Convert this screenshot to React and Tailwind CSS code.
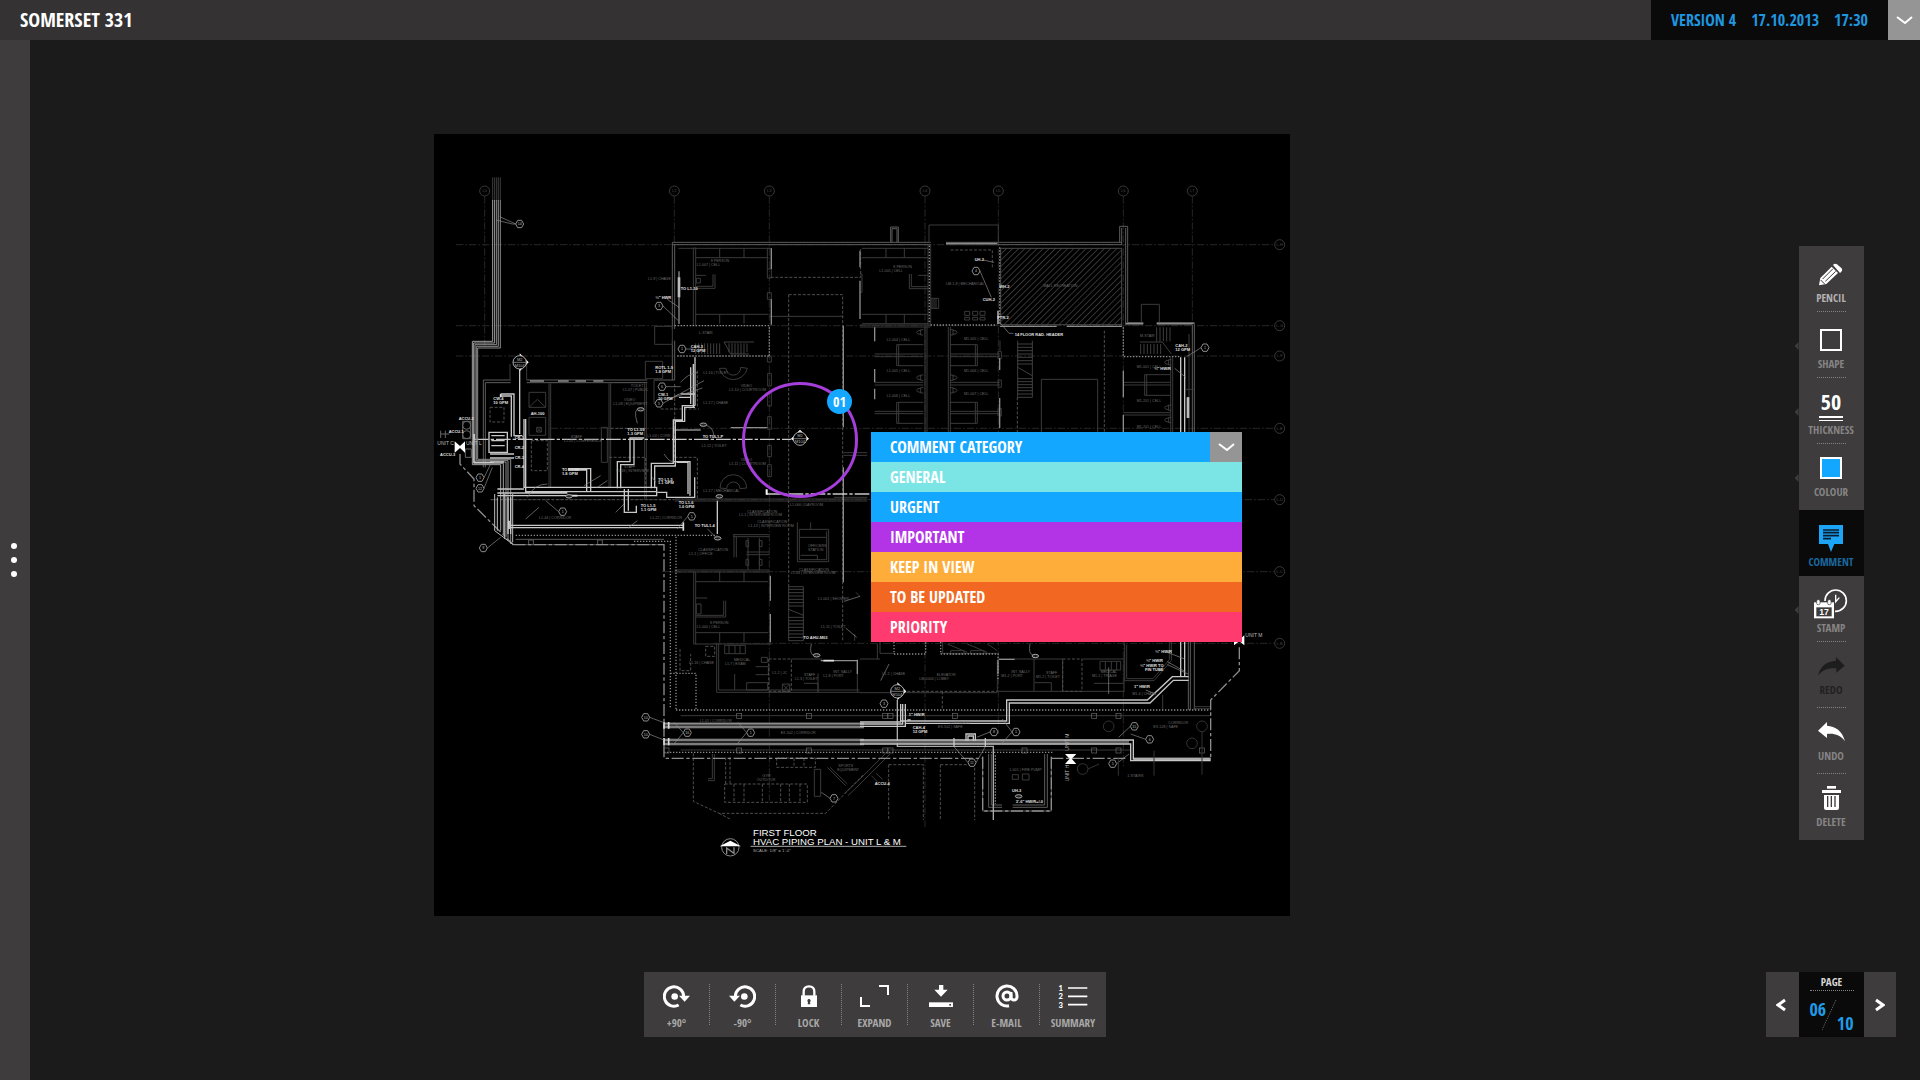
import { useState } from 'react'

const CATEGORIES = [
  { name: 'GENERAL', color: 'bg-[#7be5e6]' },
  { name: 'URGENT', color: 'bg-[#14a7ff]' },
  { name: 'IMPORTANT', color: 'bg-[#b333e7]' },
  { name: 'KEEP IN VIEW', color: 'bg-[#ffad3a]' },
  { name: 'TO BE UPDATED', color: 'bg-[#f26722]' },
  { name: 'PRIORITY', color: 'bg-[#ff3a6f]' },
]

// ---------- icons (3 units = 1px) ----------

const PencilIcon = () => (
  <svg viewBox="0 0 72 69" className="w-6 h-[23px]">
    <path d="M0 67L4 45L38 11L57 30L22 63Z" fill="#fff" />
    <path d="M42 6Q47 -1 54 4L67 15Q72 20 67 26L63 30Z" fill="#fff" />
    <path d="M11 48L42 17M19 55L50 25" stroke="#3e3c3d" strokeWidth="3" />
    <path d="M5 51L17 63" stroke="#3e3c3d" strokeWidth="3" />
  </svg>
)

const ShapeIcon = () => <span className="block size-[22px] border-2 border-white" />

const ColourIcon = () => <span className="block size-[22px] border-2 border-white bg-[#14a7ff]" />

const ThicknessIcon = () => (
  <span className="flex flex-col items-center">
    <span className="text-[22px] leading-[18px] text-white">50</span>
    <span className="mt-[6px] block w-6 h-[5px] border-t-2 border-b border-white" />
  </span>
)

const CommentIcon = () => (
  <svg viewBox="0 0 72 81" className="w-6 h-[27px]">
    <path d="M0 0H72V57H46L36 81L27 57H0Z" fill="#1ca4f6" />
    <path d="M12 15H60M12 23H60M12 32H60M12 41H36" stroke="#0a1c2c" strokeWidth="5" />
  </svg>
)

const StampIcon = () => (
  <svg viewBox="0 0 102 90" className="w-[34px] h-[30px]">
    <circle cx="65" cy="35" r="32" fill="none" stroke="#fff" strokeWidth="5" />
    <path d="M65 17V38L76 26" fill="none" stroke="#fff" strokeWidth="4" />
    <rect x="-4" y="36" width="67" height="60" fill="#3e3c3d" />
    <rect x="0" y="40" width="60" height="48" fill="#fff" />
    <rect x="8" y="32" width="10" height="15" rx="4" fill="#fff" stroke="#3e3c3d" strokeWidth="2" />
    <rect x="41" y="32" width="10" height="15" rx="4" fill="#fff" stroke="#3e3c3d" strokeWidth="2" />
    <rect x="7" y="55" width="46" height="27" fill="#3e3c3d" />
    <text x="30" y="78" textAnchor="middle" fontSize="26" fontWeight="700" fill="#fff" fontFamily="Liberation Sans">17</text>
  </svg>
)

const RedoIcon = () => (
  <svg viewBox="0 0 81 57" className="w-[27px] h-[19px]">
    <path d="M0 56C8 24 28 13 54 11V0L80 26L55 47V34C32 32 14 37 0 56Z" fill="#1d1d1d" />
  </svg>
)

const UndoIcon = () => (
  <svg viewBox="0 0 81 60" className="w-[27px] h-5">
    <path d="M81 58C73 26 52 13 27 11V0L0 26L27 48V36C50 34 67 39 81 58Z" fill="#fff" />
  </svg>
)

const DeleteIcon = () => (
  <svg viewBox="0 0 57 72" className="w-[19px] h-6" fill="#fff">
    <rect x="15" y="0" width="27" height="8" />
    <rect x="0" y="12" width="57" height="9" />
    <path d="M6 27H51V66Q51 72 45 72H12Q6 72 6 66Z" />
    <path d="M17 30V63M28 30V63M39 30V63" stroke="#3e3c3d" strokeWidth="4" />
  </svg>
)

const RotateIcon = ({ back }) => (
  <svg viewBox="0 0 81 68" className="w-[27px] h-[23px]">
    <g transform={back ? 'translate(81 0) scale(-1 1)' : undefined}>
      <path d="M47 59.4A29 29 0 1 1 62 34" fill="none" stroke="#fff" strokeWidth="9" />
      <path d="M48 32H81L65 50Z" fill="#fff" />
      <circle cx="35" cy="34" r="10" fill="#fff" />
    </g>
  </svg>
)

const LockIcon = () => (
  <svg viewBox="0 0 48 66" className="w-4 h-[22px]">
    <path d="M8 32V20Q8 4 24 4T40 20V32" fill="none" stroke="#fff" strokeWidth="7" />
    <rect y="31" width="48" height="35" fill="#fff" />
    <path d="M24 42a5 5 0 0 1 3 9l1 7h-8l1-7a5 5 0 0 1 3-9Z" fill="#3e3c3d" />
  </svg>
)

const ExpandIcon = () => (
  <svg viewBox="0 0 87 66" className="w-[29px] h-[22px]" fill="none" stroke="#fff" strokeWidth="6">
    <path d="M57 3H84V30M3 36V63H30" />
  </svg>
)

const SaveIcon = () => (
  <svg viewBox="0 0 72 66" className="w-6 h-[22px]" fill="#fff">
    <path d="M30 0H43V14H56L36 35L16 14H30Z" />
    <rect y="52" width="72" height="14" />
    <rect x="61" y="57" width="5" height="5" fill="#3e3c3d" />
  </svg>
)

const MailIcon = () => (
  <svg viewBox="0 0 24 24" className="size-6" fill="none" stroke="#fff" strokeWidth="3">
    <circle cx="12" cy="12" r="4" />
    <path d="M16 8v5a3 3 0 0 0 6 0v-1a10 10 0 1 0-8 9.8" />
  </svg>
)

const SummaryIcon = () => (
  <svg viewBox="0 -12 90 93" className="w-[30px] h-[31px] shrink-0" fill="#fff">
    <g fontFamily="Lato" fontSize="23" fontWeight="900" textAnchor="middle">
      <text x="8" y="18">1</text>
      <text x="8" y="43">2</text>
      <text x="8" y="68">3</text>
    </g>
    <path d="M30 9H88M30 34H88M30 59H88" stroke="#fff" strokeWidth="5" />
  </svg>
)

const Chevron = () => (
  <svg viewBox="0 0 17 8" className="w-[17px] h-2" fill="none" stroke="#fff" strokeWidth="2">
    <path d="M1 1L9 7L16 1" />
  </svg>
)

const TOOLS = [
  { label: 'PENCIL', Icon: PencilIcon, pad: 'pt-3', text: 'text-[#b4b3b3]', divider: true },
  { label: 'SHAPE', Icon: ShapeIcon, pad: 'pt-3', text: 'text-[#868585]', divider: true, flyout: true },
  { label: 'THICKNESS', Icon: ThicknessIcon, pad: 'pt-3', text: 'text-[#868585]', divider: true, flyout: true },
  { label: 'COLOUR', Icon: ColourIcon, pad: 'pt-2', text: 'text-[#868585]', flyout: true },
  { label: 'COMMENT', Icon: CommentIcon, pad: 'pt-3', text: 'text-[#1b689f]', active: true },
  { label: 'STAMP', Icon: StampIcon, pad: 'pt-3', text: 'text-[#868585]', divider: true, flyout: true },
  { label: 'REDO', Icon: RedoIcon, pad: 'pt-2', text: 'text-[#222]', divider: true },
  { label: 'UNDO', Icon: UndoIcon, pad: 'pt-2', text: 'text-[#868585]', divider: true },
  { label: 'DELETE', Icon: DeleteIcon, pad: 'pt-2', text: 'text-[#868585]' },
]

const ACTIONS = [
  { label: '+90°', icon: <RotateIcon /> },
  { label: '-90°', icon: <RotateIcon back /> },
  { label: 'LOCK', icon: <LockIcon /> },
  { label: 'EXPAND', icon: <ExpandIcon /> },
  { label: 'SAVE', icon: <SaveIcon /> },
  { label: 'E-MAIL', icon: <MailIcon /> },
  { label: 'SUMMARY', icon: <SummaryIcon /> },
]

// ---------- floor plan (3 units = 1px) ----------

const GRID_COLUMNS = [
  [152, 'L0', 640], [721, 'L2', 330], [1006, 'L3', 2000], [1473, 'L4', 2080],
  [1693, 'L5', 1800], [2068, 'L6', 1900], [2275, 'L7', 600],
]

const GRID_ROWS = [
  [332, 'L-H', 66], [575, 'L-G', 66], [666, 'L-F', 66], [883, 'L-E', 350],
  [1097, 'L-D', 170], [1313, 'L-C', 684], [1528, 'L-B', 840],
]

// left x, baseline y, text
const ROOM_LABELS = [
  [830, 383, '8 PERSON'], [788, 395, 'L1-007 | CELL'], [642, 437, 'L1-9 | CHASE'], [795, 601, 'L-STAIR'],
  [808, 720, 'L1-16 | TOILET'], [920, 760, 'VIDEO'], [886, 771, 'L1-10 | COURTROOM'], [808, 809, 'L1-17 | CHASE'],
  [570, 800, 'VIDEO'], [538, 812, 'L1-08 | EQUIPMENT'], [590, 760, 'TOILET'], [566, 771, 'L1-07 | PUBLIC'],
  [410, 912, 'STAFF'], [390, 923, 'L1-05 | CONFERENCE'], [570, 1001, 'STAFF'], [546, 1013, 'L1-18 | INTERVIEW'],
  [803, 940, 'L1-12 | TOILET'], [920, 981, 'VIDEO'], [886, 993, 'L1-11 | COURTROOM'], [808, 1073, 'L1-17 | MECHANICAL'],
  [315, 1154, 'L1-44 | CORRIDOR'], [648, 1154, 'L1-22 | CORRIDOR'], [640, 909, 'L1-04 | CORR'],
  [1068, 1116, 'L1-000 | DAYROOM'], [940, 1136, 'CLASSIFICATION'], [915, 1147, 'L1-1 | INTERVIEW ROOM'],
  [970, 1167, 'CLASSIFICATION'], [943, 1178, 'L1-1X | INTERVIEW ROOM'], [793, 1252, 'CLASSIFICATION'],
  [765, 1264, 'L1-1 | OFFICE'], [1122, 1239, 'OFFICERS'], [1122, 1250, 'STATION'],
  [1095, 1311, 'CLASSIFICATION'], [1070, 1321, 'L1-03 | INTERVIEW ROOM'],
  [1152, 1397, 'L1-001 | SHOWER'], [1160, 1482, 'L1-11 | TOILET'], [828, 1471, '8 PERSON'], [788, 1483, 'L1-000 | CELL'],
  [765, 1589, 'L1-16 | CHASE'], [900, 1582, 'MEDICAL'], [873, 1594, 'L1-7 | EXAM'], [1015, 1621, 'L1-2 | JC'],
  [1110, 1625, 'STAFF'], [1082, 1638, 'L1-3 | TOILET'], [1198, 1618, 'INT. SALLY'], [1168, 1629, 'L1-8 | PORT'],
  [797, 1763, 'L1-01 | CORRIDOR'], [1040, 1799, 'EX-502 | CORRIDOR'], [985, 1929, 'GYM'], [968, 1941, 'OUTDOOR'],
  [1213, 1899, 'SPORTS'], [1210, 1911, 'EQUIPMENT'],
  [1378, 402, '8 PERSON'], [1336, 414, 'L1-001 | CELL'], [1536, 452, 'LM-1-8 | MECHANICAL'], [1828, 458, 'MALL RECREATION'],
  [1358, 620, 'L1-004 | CELL'], [1358, 713, 'L1-005 | CELL'], [1358, 788, 'L1-006 | CELL'],
  [1590, 617, 'M1-005 | CELL'], [1590, 715, 'M1-006 | CELL'], [1590, 784, 'M1-007 | CELL'],
  [2108, 703, 'M1-001 | CELL'], [2108, 803, 'M1-201 | CELL'], [2108, 883, 'M1-201 | CELL'], [2118, 608, 'M-STAIR'],
  [1345, 1623, 'L1-2 | CHASE'], [1508, 1625, 'ELEVATOR'], [1456, 1637, 'LM-0000 | LOBBY'],
  [1732, 1618, 'INT. SALLY'], [1702, 1629, 'M1-2 | PORT'], [1836, 1620, 'STAFF'], [1806, 1632, 'M1-2 | TOILET'],
  [2000, 1618, 'MEDICAL'], [1974, 1629, 'M1-1 | TRIAGE'], [2095, 1683, 'M1-4 | CHASE'],
  [1546, 1770, 'CORRIDOR'], [1512, 1783, 'EX-502 | SAFE'], [2203, 1770, 'CORRIDOR'], [2158, 1783, 'EX-528 | SAFE'],
  [1726, 1911, '1-001 | FIRE PUMP'], [2080, 1928, '1-STAIRS'],
]

const PIPE_LABELS = [
  [664, 496, '¾" HWR'], [740, 467, 'TO L1-10'], [770, 641, 'CAH-3'], [770, 653, '12 GPM'], [664, 704, 'ROTL 1-9'],
  [664, 716, '1.8 GPM'], [178, 798, 'CW-4'], [178, 809, '10 GPM'], [290, 842, 'AH-100'], [74, 857, 'ACCU-2'],
  [44, 898, 'ACCU-1'], [18, 965, 'ACCU-3'], [384, 1012, 'TO L1-00'], [384, 1023, '1.8 GPM'], [806, 913, 'TO TUL1-P'],
  [672, 1040, 'TO L1-5'], [672, 1051, '1.1 GPM'], [734, 1110, 'TO L1-6'], [734, 1121, '1.0 GPM'],
  [620, 1119, 'TO L1-5'], [620, 1130, '1.1 GPM'], [782, 1179, 'TO TUL1-4'], [672, 786, 'CW-1'], [672, 797, '10 GPM'],
  [580, 892, 'TO L1-09'], [580, 903, '1.3 GPM'], [242, 915, 'CR-1'], [242, 945, 'CR-2'], [242, 976, 'CR-3'], [242, 1003, 'CR-4'],
  [1622, 380, 'UH-2'], [1646, 500, 'CUH-2'], [1696, 461, 'WH-2'], [1690, 555, 'FTR-2'],
  [1742, 605, '14 FLOOR RAD. HEADER'], [2224, 640, 'CAH-2'], [2224, 652, '12 GPM'], [2160, 708, '¾" HW/R'],
  [2163, 1557, '¾" HW/R'], [2136, 1583, '¾" HW/R'], [2118, 1599, '¾" HW/R TO'], [2133, 1612, 'FIN TUBE'],
  [2100, 1661, '1" HW/R'], [1108, 1514, 'TO AHU-M03'], [1424, 1745, '1" HW/R'], [1436, 1784, 'CAH-4'], [1436, 1796, '12 GPM'],
  [1322, 1953, 'ACCU-4'], [1734, 1974, 'UH-3'], [1745, 2006, '3\'-6" HW/R+/-0'],
]

const KEYNOTES = [
  [257, 270, '14'], [744, 645, '1'], [675, 516, '3'], [684, 758, '6'], [675, 808, '5'], [138, 1031, '1'], [138, 1063, '12'],
  [386, 1133, '1'], [773, 1147, '5'], [148, 1242, '9'], [635, 1750, '10'], [635, 1801, '10'], [760, 1796, '16'],
  [950, 1796, '1'], [1200, 1993, '7'], [1626, 411, '4'], [2313, 641, '1'], [1350, 1709, '3'], [1680, 1794, '8'],
  [1746, 1794, '1'], [1614, 1886, '11'], [2101, 1777, '15'], [2147, 1816, '6'], [2036, 1889, '5'],
]

const OUTER_WALLS = [
  'M715 325H1490M715 332H1490M1536 325H2063M1536 332H2063M715 325V585M722 332V585M715 620V738M722 620V738',
  'M1370 325V279H1393V325M1374 325V284H1389V325M2057 325V277H2081V566M2063 332V282M2075 282V572',
  'M2081 566H2128M2075 572H2128M2168 566H2281V1728M2168 572H2275V900M2263 1520V1728M2269 1520V1728',
  'M148 738H230M154 746H230M278 738H640M278 746H640M660 738H722M148 738V1000M154 746V1000',
  'M1646 1868V2031H1852V1868M1664 1860V2020H1704M1736 2020H1840V1860M1672 1860V2013H1704M1736 2013H1832V1860',
  'M245 1216H690M245 1232H690M284 1218H298V1232H284ZM491 1218H505V1232H491Z',
]

const DIM_WALLS = [
  // left wing
  'M345 748V1060M350 748V1060M525 748V1060M530 748V1060M632 748V1095M637 748V1095M660 738V810M228 738V690M278 738V690M320 738V746',
  'M722 1095H1300M722 1101H1300',
  // cells on the top left
  'M778 340V575M785 340V575M785 371H1003M785 541H1003M857 343V371M930 343V371M857 541V569M930 541V569M733 343H1006',
  'M785 424H815M785 457H837V421M785 463H843V421M787 433h12v14h-12zM662 577H715V631H662ZM634 682H686V734H634Z',
  'M1006 547H1228M1000 343H1012V405H1000ZM1000 405V432H1012V405M1000 476H1012V496H1000ZM1000 668H1012V684H1000Z',
  'M1001 718H1012V756H1001ZM1001 778H1012V816H1001ZM1001 848H1012V886H1001ZM1001 934H1012V968H1001ZM1001 992H1012V1028H1001Z',
  // courtroom desks
  'M856 703A43 43 0 0 0 940 703L920 700A22 22 0 0 1 876 703ZM858 1062A40 40 0 0 1 938 1062L918 1064A20 20 0 0 0 878 1064Z',
  'M502 880H520V985H502ZM285 775H335V820H285ZM285 850H335V904H285ZM308 880h14v14h-14zM308 880l14 14m0-14l-14 14M285 820L310 796L335 820',
  // cells on the top right of the day room
  'M1284 343H1482M1284 371H1482M1284 541H1482M1284 569H1482M1356 343V371M1411 343V371M1356 541V569M1411 541V569',
  'M1490 332V572M1482 332V572M1426 420V464H1482M1432 420V458H1482M1453 424H1482M1485 273H1693V330M1485 273V325M1278 420H1284V475H1278M1278 573H1490M1278 579H1490',
  'M1322 660H1468M1322 668H1468M1322 745H1468M1322 753H1468M1322 832H1468M1322 839H1468M1548 660H1698M1548 668H1698M1548 745H1698M1548 753H1698M1548 832H1698M1548 839H1698',
  'M1388 632H1468M1388 632V695H1468M1394 632V695M1388 805H1468M1388 805V868H1468M1394 805V868M1548 632H1630V695H1548M1624 632V695M1548 805H1630V868H1548M1624 805V868',
  'M1473 579V894M1479 579V894M1543 579V894M1549 579V894M1698 620V650M1692 652h10v22h-10zM1692 738h10v22h-10zM1692 824h10v22h-10z',
  'M1490 493H1514V523H1490ZM1494 493V523M1500 493V523M1506 493V523M1592 532h15v12h-15zM1616 532h15v12h-15zM1638 532h15v12h-15zM1592 550h15v8h-15zM1616 550h15v8h-15zM1638 550h15v8h-15z',
  'M1822 894V736H1991V894M2122 566V511H2176V566M2068 745H2210M2068 753H2210M2068 836H2210M2068 843H2210M2132 722H2210M2132 722V784H2210M2138 722V784M2210 670V894M2216 670V894M2265 600V766H2281M2256 766H2265V894',
  // classification office and lower cell block
  'M897 1202H1006M897 1208H1006M900 1202V1270M907 1208V1270M937 1254H1006M937 1262H1006M936 1220h8v18h-8zM976 1220h8v18h-8zM936 1276h8v18h-8zM976 1276h8v18h-8zM942 1212V1308M976 1212V1308',
  'M1090 1165V1283H1184V1186H1096V1277H1178V1192M1096 1210H1178M1100 1264H1150V1277M1130 1165V1186M1200 1090H1300M1228 956H1300M1228 964H1300',
  'M722 1308H1006M722 1314H1006M779 1314V1530M785 1314V1530M785 1343H1003M785 1496H1003M857 1314V1343M930 1314V1343M857 1496V1525M930 1496V1525M779 1530H1012M785 1392H820M785 1444H869V1400M785 1449H875V1400M787 1410h14v30h-14z',
  'M848 1530V1675H1280M854 1530V1668H1276M872 1534H934V1559H872ZM885 1534V1559M903 1534V1559M918 1534V1559M902 1620V1668M938 1646H1001V1668H938ZM965 1598H1003V1622H965M982 1570H1000V1585H982Z',
  'M1072 1575H1165M1110 1648H1152V1675M1152 1618V1675M1045 1650h22v22h-22zM1045 1650l22 22m0-22l-22 22M1270 1575V1675M1262 1500v20M1266 1375L1278 1388',
  'M1338 1575H1278M1330 1528V1575M1338 1524V1558H1380M1526 1524V1558M1520 1558H1690M1550 1550h40v10h-40zM1610 1550h40v10h-40zM1540 1530l60 25M1600 1530l60 25M1660 1530l30 20',
  'M1690 1575H1886V1672M1800 1575V1672M1690 1578V1672M1690 1672H2072M1802 1646H1852V1672M1946 1575H2070V1672M1998 1582H2060V1608H1998ZM2014 1582V1608M2032 1582V1608M2048 1582V1608M1980 1648H2068',
  'M2072 1525V1640H2160L2212 1580V1520M2078 1532V1634H2157L2206 1577V1520M2281 1718H2330M2281 1724H2330M2186 1682V1728M1278 1676H1690',
  // service building and gym
  'M1735 1922h18v14h-18zM1765 1920h20v18h-20z',
  'M835 1860V1934H822M841 1860V1940H822M1180 1900L1235 1955M1188 1900L1240 1950M1242 1985L1278 1950M1232 1978L1278 1935M1278 1950L1368 1860M1278 1935L1353 1860M1312 1925l20 20M1326 1918l20 18M1141 1906H1160V1987H1141Z',
  'M740 1745H2330M740 1848H2090',
]

const STAIRS = [
  'M785 628V660M794 628V660M803 628V660M812 628V660M821 628V660M830 628V660M839 628V660M848 628V660M857 628V660',
  'M870 624H960M870 624L890 660H945M885 628V655M894 628V660M903 628V660M912 628V660M921 628V660M930 628V660M939 628V655',
  'M1064 1358H1108V1520H1064ZM1064 1366H1108M1064 1376H1108M1064 1386H1108M1064 1396H1108M1064 1406H1108M1064 1416H1108M1064 1426L1108 1444M1064 1450H1108M1064 1460H1108M1064 1470H1108M1064 1480H1108M1064 1490H1108M1064 1500H1108M1064 1510H1108',
  'M1751 620V790H1795V620M1751 630H1795M1751 640H1795M1751 650H1795M1751 660H1795M1751 670H1795M1751 680H1795M1751 690H1795M1751 700L1795 725M1751 734H1795M1751 743H1795M1751 752H1795M1751 761H1795M1751 770H1795M1751 780H1795',
  'M2118 624H2185L2212 660M2120 630V660M2130 630V660M2140 630V660M2150 630V660M2160 630V660M2170 630V660M2180 630V660M2168 580V622M2178 580V622M2188 580V622M2198 580V622M2208 580V622',
]

const DOTTED_WALLS = [
  'M722 575H1006M730 666H1006M1006 580V666', 'M245 1204H850', 'M600 1222H709V1725M726 1208V1725', 'M709 1618H786V1725M726 1728H2330M690 1855H1860',
  'M1490 573H1690M1486 335V570M1697 340V570M2068 580V668H2240', 'M1380 1524V1560H1475V1524M1520 1524V1560H1692V1640', 'M1684 1864V2010',
]

const DASHED_WALLS = [
  'M530 883H635M525 970H635V1060M722 970H790V1095M790 710V820M722 750V970M680 825H795', 'M1064 482H1226V1520M1064 482V1358M1010 430H1280V345',
  'M1004 1575H1072V1672H1004Z', 'M1420 1672H1690M1525 1672V1728M1886 1575H1944V1672H1886Z', 'M168 820H210V864H168ZM292 920H340V1010H292ZM170 1097H720',
  'M778 1858V2002L855 2038H1175L1290 1920M855 2038l35 18', 'M872 1950H1120V2005H872ZM900 1950V2005M930 1950V2005M985 1950V2005M1040 1950V2005M1066 1950V2005M1098 1950V2005',
  'M1028 1872H1144V1900H1028ZM1080 1872V1900M1110 1872V1900M888 1870V1950M875 1870V1950', 'M1364 1892H1468V2058M1364 1892V2058M1519 1892H1622V2058M1519 1892V2058',
  'M1750 790V894M2011 590V894M815 1537H842V1567H815ZM1550 348H1675V400M738 1545V1610H770V1560',
]

const MID_WALLS = [
  'M1012 343V405M1012 496V572M1228 575V880M1228 1000V1345M1009 1325V1400M1009 1440V1525M1278 350V400M1278 440V555M1322 580V622M1322 705V745M1322 764V796',
  'M1697 672V708M1697 792V882M1698 577H1868M1898 577H2064M2068 710V790M2068 843V894M2075 568H2128M2168 568H2279M1536 328H1690M735 412V570',
  'M288 741H330M372 741H404M424 741H456M478 741H508M1160 1580H1270V1620M1695 1576H1742M1692 1580V1620M720 888H800M890 881H1000',
]

const PIPES = [
  'M200 780H240V905H265M200 786H232V908M257 705V900M270 855V1060H668V1085H190M275 855V1073H668M270 1065H190M190 1077H400M430 1085H560',
  'M458 1073V1008H402M470 1073V1004H402M550 1063V983H588V912H630M560 1063V992H600V915M652 1063V988H718V858H745V815H783M662 1063V996H724V862H752V820H783',
  'M571 1065V1135H607V1115M583 1065V1130M670 1075H698V1090H782V1030M720 983H768V1085M728 985H762V1080M783 670V815M778 690V820M770 700V810M740 780H783M735 790H770',
  'M230 1174H748M230 1181H748M222 1090V1200M230 1090V1200M850 1100V1200M120 900V985H180M165 895H220V955H165ZM172 905H212M172 920H212M172 935H212M168 960H240M168 972H240M168 984H210',
  'M1278 1764H1400V1710M1278 1770H1406V1710M1278 1777H1414V1710M1400 1761H1718V1698H2140L2215 1628H2264M1414 1768H1726V1707H2148L2218 1639H2264',
  'M1278 1818H2098V1875H2330M1278 1830H2090V1880H2330M2240 670V900M2252 670V900M2240 1520V1628M2252 1520V1628M2262 790V852',
  'M1596 1820V1800H1624V1820M1602 1820V1806H1618V1820M1560 1812V1838M1654 1812V1838M1420 1758H1430M1692 530V570',
]

const HEAVY_DUCTS = 'M690 1769H1290M690 1779H1290M690 1818H1290M690 1830H1290'

const LEADERS = [
  'M245 270L197 248M245 270H235L186 258', 'M687 516L733 560M700 496L735 520', 'M756 645H778', 'M696 758H740M687 808L735 780M150 1031L170 990M150 1063L175 1000',
  'M374 1133L335 1100M761 1147L730 1185M160 1242L200 1210', 'M647 1750L690 1766M647 1801L690 1818M748 1796L720 1765M748 1796L718 1832M938 1796L912 1765M938 1796L908 1832',
  'M1638 411L1672 490M1647 378L1680 385M1693 560L1725 598H1738M2301 641L2258 668M2222 703L2255 730', 'M2200 1555L2252 1575M2200 1583L2252 1612M2200 1592L2262 1620M2135 1668L2165 1680',
  'M1668 1794L1628 1810M1734 1794L1705 1755M1734 1794L1700 1832M1602 1886L1560 1838M1626 1886L1654 1838M2089 1777L2054 1810M2135 1816L2090 1800M2048 1889L2085 1860',
  'M1188 1993L1162 1975M1132 1530Q1125 1560 1140 1564M1788 1530Q1782 1560 1798 1564M610 868Q595 820 620 826M840 908Q838 875 810 873M820 1184L845 1210M275 1155L315 1120M582 1182L610 1160M665 1045L655 1030M1365 1590L1340 1640M2024 1680V1600M1230 1402L1278 1387M1235 1482L1268 1510',
  'M280 1090Q300 1050 340 1050M450 1055L500 1025M490 1060L520 1040M690 960Q710 990 720 980M740 745Q760 720 790 716M700 800L810 740M720 790L805 762M545 1135L570 1110',
]

// small oval tags at the ends of leaders
const TAGS = [[620, 826], [808, 872], [856, 1087], [851, 1213], [1148, 1564], [1804, 1566], [405, 1087], [1754, 1987]]

const BOLLARDS = [
  [908, 1738], [1117, 1738], [690, 1842], [908, 1842], [1117, 1842], [1346, 1738], [1362, 1738], [1555, 1738], [1973, 1738],
  [2046, 1738], [1346, 1842], [1362, 1842], [1764, 1842], [1973, 1842], [2046, 1842], [2296, 1842],
]

const SectionMark = ({ x, y, dir }) => (
  <g>
    <path
      d={dir === 'up' ? 'M-27 0L0 -27L27 0L18 8H-18Z' : 'M0 -27L27 0L0 27V18L0 -18Z'}
      transform={`translate(${x} ${y})`}
      fill="#fff"
    />
    <circle cx={x} cy={y} r="20" fill="#000" stroke="#aaa" strokeWidth="3" />
    <path d={`M${x - 20} ${y}H${x + 20}`} stroke="#aaa" strokeWidth="2" />
    <text x={x} y={y - 4} textAnchor="middle" fontSize="12" fill="#bbb">M2</text>
    <text x={x} y={y + 13} textAnchor="middle" fontSize="12" fill="#bbb">M104</text>
  </g>
)

const FloorPlan = () => (
  <svg viewBox="0 0 2568 2346" className="block w-full bg-black font-normal" fill="none" fontFamily="Liberation Sans" role="img" aria-label="First floor HVAC piping plan">
    <defs>
      <pattern id="hatch" width="13" height="13" patternUnits="userSpaceOnUse" patternTransform="rotate(45)">
        <path d="M0 0V13" stroke="#4c4c4c" strokeWidth="4" />
      </pattern>
    </defs>

    <g stroke="#262626" strokeWidth="3">
      {GRID_COLUMNS.map(([x, , end]) => (
        <path key={x} d={`M${x} 187V${end}`} strokeDasharray="22 6 5 6" />
      ))}
      {GRID_ROWS.map(([y, , start]) => (
        <path key={y} d={`M${start} ${y}H2521`} strokeDasharray="22 6 5 6" />
      ))}
      {GRID_COLUMNS.map(([x]) => <circle key={x} cx={x} cy="171" r="15" stroke="#383838" />)}
      {GRID_ROWS.map(([y]) => <circle key={y} cx="2537" cy={y} r="15" stroke="#383838" />)}
    </g>
    <g fill="#4a4a4a" fontSize="12" textAnchor="middle">
      {GRID_COLUMNS.map(([x, name]) => <text key={x} x={x} y="175">{name}</text>)}
      {GRID_ROWS.map(([y, name]) => <text key={y} x="2537" y={y + 4}>{name}</text>)}
    </g>

    <rect x="1700" y="343" width="363" height="229" fill="url(#hatch)" stroke="#4a4a4a" strokeWidth="3" />

    <g stroke="#5c5c5c" strokeWidth="3">
      {OUTER_WALLS.map((d) => <path key={d} d={d} />)}
    </g>
    <g stroke="#3a3a3a" strokeWidth="3">
      {DIM_WALLS.map((d) => <path key={d} d={d} />)}
    </g>
    <g stroke="#5e5e5e" strokeWidth="2">
      {STAIRS.map((d) => <path key={d} d={d} />)}
    </g>
    <g stroke="#8a8a8a" strokeWidth="4" strokeDasharray="4 5">
      {DOTTED_WALLS.map((d) => <path key={d} d={d} />)}
    </g>
    <g stroke="#4e4e4e" strokeWidth="3" strokeDasharray="9 5">
      {DASHED_WALLS.map((d) => <path key={d} d={d} />)}
    </g>
    <g stroke="#8c8c8c" strokeWidth="4">
      {MID_WALLS.map((d) => <path key={d} d={d} />)}
    </g>

    {/* toilets along the cell walls */}
    <g stroke="#555" strokeWidth="2">
      {[595, 731, 769].map((y) => <path key={y} d={`M1468 ${y - 8}h-8v16h8M1460 ${y - 6}a12 6 0 1 0 0 12M1549 ${y - 8}h8v16h-8M1557 ${y - 6}a12 6 0 1 1 0 12`} />)}
      {[685, 821, 858].map((y) => <path key={y} d={`M2212 ${y - 8}h-8v16h8M2204 ${y - 6}a12 6 0 1 0 0 12`} />)}
    </g>

    {/* match lines */}
    <g stroke="#8c8c8c" strokeWidth="4" strokeDasharray="36 8 10 8">
      <path d="M238 1232H690V1873H1646M1852 1873H2080" />
      <path d="M78 960V990L120 1035V1115L238 1232" />
      <path d="M2416 1540V1610L2330 1698V1870" />
      <path d="M1646 1868V2031H1852V1868" />
    </g>
    <g stroke="#c8c8c8" strokeWidth="4" strokeDasharray="44 6 10 6">
      <path d="M120 916H1072" />
      <path d="M998 1080H1320" />
    </g>
    <path d="M120 900V916M998 1066V1082" stroke="#fff" strokeWidth="6" />
    <path d="M1390 1698V1837H1678V2058" stroke="#aaa" strokeWidth="4" />

    {/* risers from the north */}
    <g stroke="#3c3c3c" strokeWidth="3">
      <path d="M176 130V200M182 130V200M188 130V200M193 130V200M199 130V200" />
      <path d="M176 198V622H115V992H200V1190M182 198V627H119V988H208V1200" stroke="#a0a0a0" />
      <path d="M188 198V632H123V984H216V1210M193 198V637H127V980H222V1220M199 198V642H131V976H230V1230" stroke="#8a8a8a" />
      <path d="M182 1080V1190L238 1232M190 1090V1190M212 1080V1215M236 1080V1225" stroke="#bbb" />
    </g>

    <path d={HEAVY_DUCTS} stroke="#4c4c4c" strokeWidth="9" />
    <path d={HEAVY_DUCTS} stroke="#8c8c8c" strokeWidth="4" />
    <path d="M1278 1824H2085M2100 1874H2330" stroke="#5e5e5e" strokeWidth="9" />
    <g stroke="#c8c8c8" strokeWidth="4">
      {PIPES.map((d) => <path key={d} d={d} />)}
    </g>
    <path d="M735 430V490M2262 790V852" stroke="#bdbdbd" strokeWidth="8" />
    <path d="M1168 1580H1200M430 1085H400M200 780v10M225 1160V1185M748 1165V1190M690 1764v20M704 1764v20M690 1812v22M704 1812v22" stroke="#ddd" strokeWidth="5" />

    <g stroke="#8c8c8c" strokeWidth="2">
      {LEADERS.map((d) => <path key={d} d={d} />)}
      {TAGS.map(([x, y]) => <ellipse key={`${x}-${y}`} cx={x} cy={y} rx="10" ry="5" fill="#222" stroke="#aaa" strokeWidth="3" />)}
      {KEYNOTES.map(([x, y]) => (
        <path key={`${x}-${y}`} d={`M${x - 12} ${y}l6 -11h12l6 11l-6 11h-12Z`} fill="#000" strokeWidth="3" />
      ))}
      {BOLLARDS.map(([x, y]) => <rect key={`${x}-${y}`} x={x} y={y} width="15" height="15" stroke="#6a6a6a" />)}
    </g>
    <g stroke="#333" strokeWidth="3">
      <circle cx="2024" cy="1777" r="16" />
      <circle cx="2304" cy="1777" r="16" />
      <circle cx="2274" cy="1828" r="16" />
      <circle cx="1946" cy="1905" r="16" />
      <path d="M2304 1793V1922M2053 1873V1925M2160 1850V1925M1962 1905L1995 1890" />
    </g>
    <g stroke="#666" strokeWidth="3">
      <circle cx="98" cy="874" r="12" />
      <circle cx="98" cy="902" r="12" />
      <path d="M86 862H110V914H86ZM94 945H112V970H94ZM20 890V912M34 890V912M20 900H46" />
    </g>

    <g fill="#bbb" fontSize="11" textAnchor="middle">
      {KEYNOTES.map(([x, y, n]) => <text key={`${x}-${y}`} x={x} y={y + 4}>{n}</text>)}
    </g>
    <g fill="#6a6a6a" fontSize="11">
      {ROOM_LABELS.map(([x, y, label]) => <text key={`${x}-${y}`} x={x} y={y}>{label}</text>)}
    </g>
    <g fill="#e0e0e0" fontSize="12" fontWeight="700">
      {PIPE_LABELS.map(([x, y, label]) => <text key={`${x}-${y}`} x={x} y={y}>{label}</text>)}
    </g>

    <SectionMark x={257} y={685} dir="right" />
    <SectionMark x={1098} y={914} dir="up" />
    <SectionMark x={1390} y={1672} dir="right" />

    {/* unit boundaries */}
    <g fill="#fff">
      <path d="M62 922L78 936L93 922V956L78 942L62 956Z" />
      <path d="M1893 1860H1927L1913 1874L1927 1890H1893L1907 1874Z" />
      <path d="M2400 1504L2416 1517L2431 1504V1534L2416 1522L2400 1534Z" />
    </g>
    <g fill="#bbb" fontSize="15">
      <text x="10" y="933">UNIT C</text>
      <text x="96" y="933">UNIT L</text>
      <text x="2434" y="1510">UNIT M</text>
      <text transform="translate(1904 1850) rotate(-90)">UNIT M</text>
      <text transform="translate(1904 1942) rotate(-90)">UNIT H</text>
    </g>

    {/* drawing title */}
    <g fill="#fff">
      <text x="957" y="2106" fontSize="29">FIRST FLOOR</text>
      <text x="957" y="2134" fontSize="29">HVAC PIPING PLAN - UNIT L &amp; M</text>
      <text x="957" y="2154" fontSize="13" fill="#aaa">SCALE: 1/8" = 1'-0"</text>
      <path d="M950 2137H1417" stroke="#aaa" strokeWidth="3" />
      <circle cx="889" cy="2140" r="26" fill="none" stroke="#888" strokeWidth="3" />
      <path d="M857 2137L889 2120L921 2137Z" />
      <path d="M878 2160V2142L900 2158V2140" fill="none" stroke="#888" strokeWidth="4" />
    </g>
  </svg>
)

const CategoryMenu = () => {
  const [open, setOpen] = useState(true)

  return (
    <div className="absolute left-[437px] top-[298px] w-[371px] text-base leading-[30px] text-white">
      <button
        onClick={() => setOpen(!open)}
        className="flex w-full h-[30px] bg-[#14a7ff] text-left cursor-pointer"
        aria-expanded={open}
      >
        <span className="flex-1 pl-[19px]">COMMENT CATEGORY</span>
        <span className="flex w-8 h-full items-center justify-center bg-[#959595]">
          <Chevron />
        </span>
      </button>
      {open && (
        <ul>
          {CATEGORIES.map((c) => (
            <li key={c.name}>
              <button className={`block w-full h-[30px] pl-[19px] text-left cursor-pointer ${c.color}`}>{c.name}</button>
            </li>
          ))}
        </ul>
      )}
    </div>
  )
}

const Toolbox = () => (
  <div className="w-[65px] mt-[206px] bg-[#3e3c3d]">
    {TOOLS.map(({ label, Icon, pad, text, divider, active, flyout }) => (
      <button
        key={label}
        className={`relative flex flex-col items-center w-full h-[66px] cursor-pointer ${pad} ${active ? 'bg-[#0a0a0a]' : ''}`}
      >
        {flyout && (
          <span className="absolute -left-1 top-[30px] w-1 h-2 bg-[#3e3c3d] [clip-path:polygon(100%_0,0_50%,100%_100%)]" />
        )}
        <span className="flex h-8 items-center justify-center">
          <Icon />
        </span>
        <span className={`mt-px text-[11px] leading-[14px] ${text}`}>{label}</span>
        {divider && <span className="mt-auto w-[29px] border-b border-dotted border-[#858484]" />}
      </button>
    ))}
  </div>
)

const ActionBar = () => (
  <div className="flex bg-[#3e3c3d]">
    {ACTIONS.map(({ label, icon }, i) => (
      <button key={label} className="flex items-center w-[66px] h-[65px] cursor-pointer">
        <span className="flex flex-1 flex-col items-center pt-1">
          <span className="flex h-[26px] items-center">{icon}</span>
          <span className="mt-[7px] text-[11px] leading-[14px] text-[#a9a8a8]">{label}</span>
        </span>
        {i < ACTIONS.length - 1 && <span className="h-[41px] border-r border-dotted border-[#858484]" />}
      </button>
    ))}
  </div>
)

const Pager = () => (
  <div className="flex h-[65px] mt-auto">
    <button aria-label="Previous page" className="flex w-[33px] items-center justify-center bg-[#3e3c3d] cursor-pointer">
      <svg viewBox="0 0 10 14" className="w-[10px] h-[14px] mr-1" fill="none" stroke="#fff" strokeWidth="3">
        <path d="M9 2L2 7L9 12" />
      </svg>
    </button>
    <div className="flex flex-col w-[65px] items-center bg-[#0a0a0a] pt-[3px]">
      <span className="text-[11px] leading-[14px] text-[#d5d5d5]">PAGE</span>
      <span className="mt-px w-11 border-b border-dotted border-[#858484]" />
      <div className="flex w-11 mt-2 h-[34px] text-lg leading-5 text-[#1f9be6]">
        <span>06</span>
        <svg viewBox="0 0 15 32" className="w-[15px] h-8 shrink-0 -mx-1" stroke="#6b6b6b">
          <path d="M14 1L0 31" strokeDasharray="1 1" />
        </svg>
        <span className="ml-auto self-end">10</span>
      </div>
    </div>
    <button aria-label="Next page" className="flex w-8 items-center justify-center bg-[#3e3c3d] cursor-pointer">
      <svg viewBox="0 0 10 14" className="w-[10px] h-[14px]" fill="none" stroke="#fff" strokeWidth="3">
        <path d="M1 2L8 7L1 12" />
      </svg>
    </button>
  </div>
)

export default function App() {
  return (
    <div className="flex min-h-screen flex-col bg-[#1b1b1b] font-['Open_Sans_Condensed','Roboto_Condensed',sans-serif] font-bold">
      <header className="flex h-10 items-stretch bg-[#343233]">
        <h1 className="flex items-center pl-5 text-xl text-white">SOMERSET 331</h1>
        <div className="ml-auto flex w-[237px] items-center justify-between bg-[#0a0a0a] px-5 text-base text-[#1f97e0]">
          <span>VERSION 4</span>
          <span>17.10.2013</span>
          <span>17:30</span>
        </div>
        <button aria-label="Versions" className="flex w-8 items-center justify-center bg-[#959595] cursor-pointer">
          <Chevron />
        </button>
      </header>

      <div className="flex flex-1">
        <aside className="flex w-[30px] shrink-0 bg-[#3e3c3d]">
          <button aria-label="Open panel" className="flex w-7 flex-col items-center justify-center gap-2 cursor-pointer">
            <span className="size-[6px] rounded-full bg-white" />
            <span className="size-[6px] rounded-full bg-white" />
            <span className="size-[6px] rounded-full bg-white" />
          </button>
        </aside>

        <main className="flex flex-1 flex-col items-center pr-[46px] pt-[94px] pb-[43px]">
          <div className="relative mr-[26px] w-[856px]">
            <FloorPlan />
            <div className="absolute left-[308px] top-[248px] size-[116px] rounded-full border-[3px] border-[#a63edb]" />
            <button className="absolute left-[393px] top-[255px] flex size-[25px] items-center justify-center rounded-full bg-[#14a7ff] text-sm text-white cursor-pointer">
              01
            </button>
            <CategoryMenu />
          </div>
          <div className="mt-auto">
            <ActionBar />
          </div>
        </main>

        <div className="mr-6 flex w-[130px] flex-col items-center pb-[43px]">
          <Toolbox />
          <Pager />
        </div>
      </div>
    </div>
  )
}
